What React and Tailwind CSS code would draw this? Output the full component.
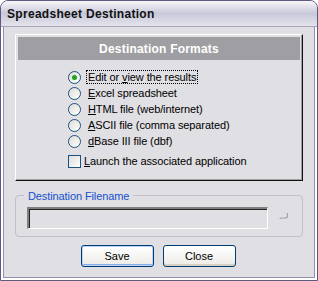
import { useState } from 'react'

const FORMATS = [
  { key: 'view', u: 'E', rest: 'dit or ', u2: 'v', rest2: 'iew the results' },
  { key: 'xls', u: 'E', rest: 'x', u2: 'c', rest2: 'el spreadsheet' },
  { key: 'html', u: 'H', rest: 'TML file (web/internet)' },
  { key: 'csv', u: 'A', rest: 'SCII file (comma separated)' },
  { key: 'dbf', u: 'd', rest: 'Base III file (dbf)' },
]

function Radio({ checked }) {
  return (
    <span className="w-[13px] h-[13px] rounded-full border border-[#1c5180] bg-gradient-to-br from-[#dcdcd7] to-white flex items-center justify-center shrink-0">
      {checked && <span className="w-[5px] h-[5px] rounded-full bg-[#21a121]" />}
    </span>
  )
}

function Label({ f }) {
  if (f.key === 'xls') {
    return <span><u>E</u>xcel spreadsheet</span>
  }
  if (f.key === 'view') {
    return <span>Edit or <u>v</u>iew the results</span>
  }
  return <span><u>{f.u}</u>{f.rest}</span>
}

export default function App() {
  const [sel, setSel] = useState('view')
  return (
    <div className="w-[318px] h-[281px] font-['Liberation_Sans',Arial,sans-serif] text-[11px] text-black">
      <div className="w-full h-full flex flex-col rounded-t-[8px] border border-[#5d5a80] bg-[#e0dfe3] overflow-hidden">
        {/* title bar */}
        <div className="h-[26px] shrink-0 flex items-center px-[6px] bg-gradient-to-b from-[#f7f7fa] via-[#c9c8da] to-[#e4e4ec] border-b border-[#a5a4bc]">
          <span className="font-bold text-[12px] text-[#111] tracking-[0.3px]">Spreadsheet Destination</span>
        </div>
        {/* body */}
        <div className="flex-1 flex flex-col border-l-2 border-r-2 border-b-2 border-[#ffffff] shadow-[inset_1px_0_#9291ad,inset_-1px_0_#9291ad,inset_0_-1px_#9291ad] px-[12px] pt-[7px]">
          {/* formats group */}
          <div className="h-[147px] border-t border-l border-white border-r border-b border-r-[#111] border-b-[#111] shadow-[inset_-1px_-1px_#a0a0a4] p-[2px]">
            <div className="h-[23px] bg-[#9f9fa3] flex items-center justify-center text-white font-bold text-[12px] tracking-[0.2px]">
              Destination Formats
            </div>
            <div className="flex flex-col pl-[50px] pt-[9px] tracking-[-0.1px]">
              {FORMATS.map((f) => (
                <div
                  key={f.key}
                  className="h-[16px] flex items-center gap-[6px] cursor-default"
                  onClick={() => setSel(f.key)}
                >
                  <Radio checked={sel === f.key} />
                  <span className={sel === f.key ? 'outline-1 outline-dotted outline-black px-[1px] leading-[12px]' : 'px-[1px] leading-[12px]'}>
                    <Label f={f} />
                  </span>
                </div>
              ))}
              <div className="h-[16px] mt-[4px] flex items-center gap-[3px]">
                <span className="w-[13px] h-[13px] border border-[#1c5180] bg-gradient-to-br from-[#dcdcd7] to-white shrink-0" />
                <span><u>L</u>aunch the associated application</span>
              </div>
            </div>
          </div>
          {/* filename group */}
          <div className="relative mt-[14px] h-[42px] border border-[#c0bfc6] rounded-[4px] flex items-center pl-[11px] pr-[12px]">
            <span className="absolute left-[8px] top-[-8px] px-[4px] bg-[#e0dfe3] text-[#1650d0] tracking-[-0.1px]">Destination Filename</span>
            <div className="mt-[3px] w-[242px] h-[22px] border-t-2 border-l-2 border-t-[#808080] border-l-[#808080] border-b border-r border-white shadow-[inset_1px_1px_#222]" />
            <svg className="ml-[10px] mt-[2px]" width="12" height="10" viewBox="0 0 12 10">
              <path d="M9.5 1 V4 Q9.5 6 7 6 H4 Q2 6 2 7" fill="none" stroke="#a3a2a8" strokeWidth="1.2" />
            </svg>
          </div>
          {/* buttons */}
          <div className="flex justify-center gap-[9px] mt-[8px] pr-[2px]">
            <button className="w-[73px] h-[22px] rounded-[3px] border border-[#003c74] bg-gradient-to-b from-white to-[#ecebe6] shadow-[inset_0_0_0_1px_#bcd4f6,inset_0_-2px_#89ade4] text-[11px]">
              Save
            </button>
            <button className="w-[73px] h-[22px] rounded-[3px] border border-[#003c74] bg-gradient-to-b from-white to-[#ecebe6] shadow-[inset_0_-2px_#d6d0c5] text-[11px]">
              Close
            </button>
          </div>
        </div>
      </div>
    </div>
  )
}
